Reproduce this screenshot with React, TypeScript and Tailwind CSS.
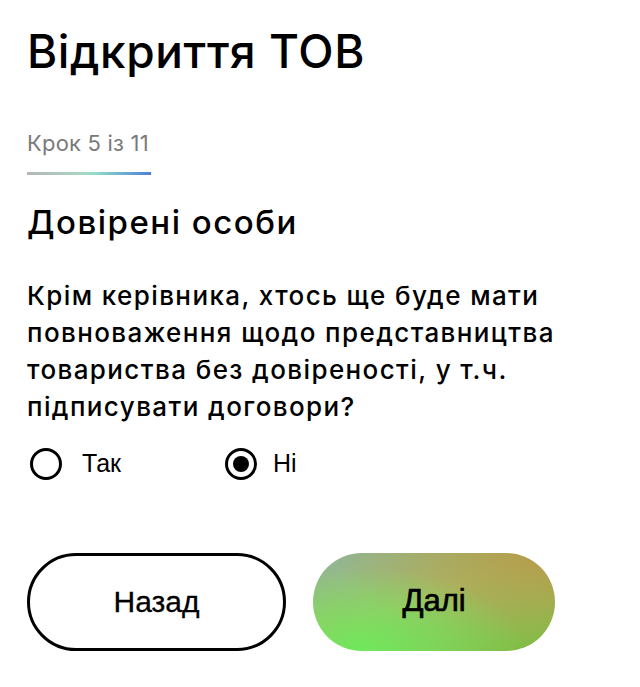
import React from "react";

export default function App() {
  return (
    <div className="w-[640px] h-[687px] bg-white text-black overflow-hidden" style={{ fontFamily: "Inter, 'Liberation Sans', sans-serif" }}>
      <div className="pl-[27px] pr-[20px]">
        <h1 className="pt-[23px] text-[46px] leading-[56px] font-medium tracking-[0.6px]">Відкриття ТОВ</h1>
        <div className="mt-[51px] text-[22px] leading-[26px] text-[#7a7a7a] tracking-[0.2px]">Крок 5 із 11</div>
        <div className="mt-[16px] h-[3px] w-[124px] bg-[linear-gradient(90deg,#b5b5b5_0%,#a9d8c4_45%,#8fdcc8_55%,#4e7fd6_100%)]" />
        <h2 className="mt-[26px] text-[33px] leading-[42px] font-medium tracking-[1.5px]">Довірені особи</h2>
        <p className="mt-[34px] w-[600px] text-[26px] leading-[37px] font-medium tracking-[1.4px]">
          Крім керівника, хтось ще буде мати<br />повноваження щодо представництва<br />товариства без довіреності, у т.ч.<br />підписувати договори?
        </p>
        <div className="mt-[20px] flex items-center" style={{ fontFamily: "'Liberation Sans', Arial, sans-serif" }}>
          <label className="flex items-center w-[198px] pl-[3px]">
            <span className="w-[32px] h-[32px] rounded-full border-[3px] border-black" />
            <span className="ml-[20px] text-[25px]">Так</span>
          </label>
          <label className="flex items-center">
            <span className="w-[32px] h-[32px] rounded-full border-[3px] border-black flex items-center justify-center">
              <span className="w-[16px] h-[16px] rounded-full bg-black" />
            </span>
            <span className="ml-[16px] text-[25px]">Ні</span>
          </label>
        </div>
        <div className="mt-[70px] flex gap-[27px]" style={{ fontFamily: "'Liberation Sans', Arial, sans-serif" }}>
          <button className="w-[259px] h-[98px] rounded-full border-[3px] border-black bg-white text-[30px] [-webkit-text-stroke:0.3px_black]">Назад</button>
          <button className="w-[242px] h-[98px] rounded-full text-[31px] [-webkit-text-stroke:0.7px_black] bg-[radial-gradient(ellipse_at_20%_100%,#6fe85c_0%,rgba(111,232,92,0)_60%),radial-gradient(ellipse_at_100%_0%,#b69a48_0%,rgba(182,154,72,0)_65%),linear-gradient(160deg,#8db49c_0%,#a6bf6c_45%,#7dbb3e_100%)]">Далі</button>
        </div>
      </div>
    </div>
  );
}
